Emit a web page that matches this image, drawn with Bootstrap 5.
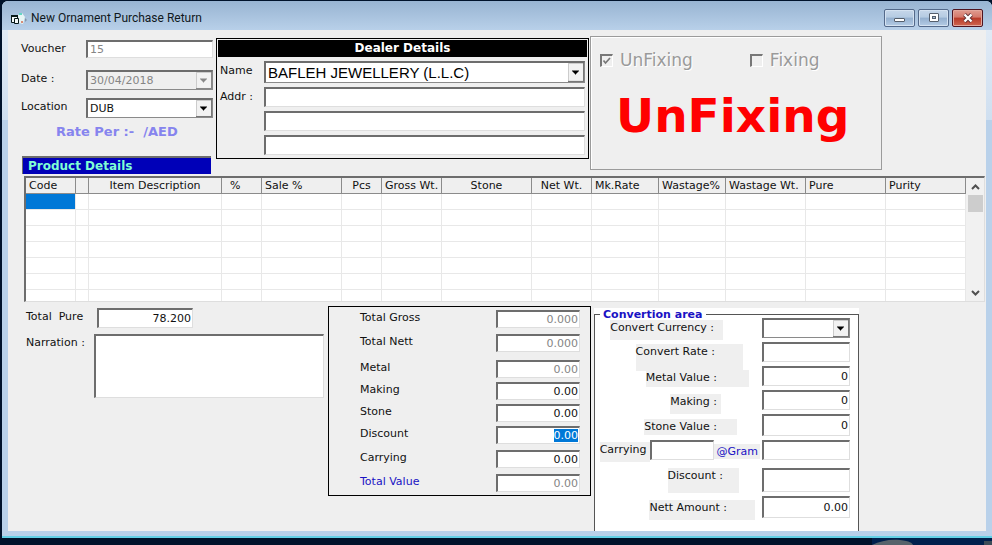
<!DOCTYPE html>
<html lang="en">
<head>
<meta charset="utf-8">
<meta name="viewport" content="width=device-width, initial-scale=1">
<title>New Ornament Purchase Return</title>
<link href="https://cdn.jsdelivr.net/npm/bootstrap@5.3.0/dist/css/bootstrap.min.css" rel="stylesheet">
<style>
:root{--face:#efefef;--frame:#b9d1ea;--dark:#6d6d6d;--light:#dedede;--ink:#111;}
body{background:#00122b;font:11px/14px "DejaVu Sans",Verdana,sans-serif;color:var(--ink);}
.desk{padding:1px 0 0 2px;}
.win{background:linear-gradient(#e6eef7 0,#cfdff0 119px,var(--frame) 119px);border-bottom:2px solid #63d0e6;border-radius:6px 6px 0 0;padding:0 6px 5px;}
.titlebar{height:29px;background:linear-gradient(#98b4d2,#b8d0e9);margin:0 -6px;padding:8px 9px 3px 8px;border-radius:6px 6px 0 0;}
.caption{font:12px/18px Roboto,"Open Sans",sans-serif;color:#101820;}
.wbtns{gap:3px;}
.wbtn{width:31px;height:18px;border:1px solid #53698a;border-radius:2px;padding:0;display:flex;align-items:center;justify-content:center;background:linear-gradient(#c6d7ea 0,#b5cbe2 45%,#94b0cf 50%,#b4cce5 100%);box-shadow:inset 0 0 0 1px #d4e2f1;}
.wbtn.shut{border-color:#4f1420;background:linear-gradient(#e09c90 0,#d4796b 45%,#b83a28 50%,#cf6650 100%);box-shadow:inset 0 0 0 1px #e3a79c;}
.client{background:var(--face);}
.top-grid{display:grid;grid-template-columns:208px minmax(0,373fr) minmax(0,293fr) minmax(0,104fr);}
.fld{display:block;width:100%;min-width:0;height:18px;border:1px solid;border-width:2px 1px 1px 2px;border-color:var(--dark) var(--light) var(--light) var(--dark);background:#fff;color:var(--ink);padding:0 2px;border-radius:0;outline:0;font:inherit;}
.fld:disabled{color:#858585;opacity:1;}
.fld.tall{height:20px;}
.num{text-align:right;padding-right:1px;}
textarea.fld{resize:none;height:64px;}
select.fld{appearance:none;height:20px;border-color:var(--dark) #8a8a8a #8a8a8a var(--dark);padding-right:18px;background:#fff url("data:image/svg+xml,%3Csvg xmlns='http://www.w3.org/2000/svg' width='16' height='100%25'%3E%3Crect width='16' height='100%25' fill='%23777'/%3E%3Crect width='15' height='94%25' fill='%23ccc'/%3E%3Crect x='1' y='1' width='14' height='88%25' fill='%23f2f2f2'/%3E%3Csvg y='50%25' overflow='visible'%3E%3Cpath d='M4-2h7v1h-1v1H9v1H8v1H7v-1H6v-1H5v-1H4z' fill='%23000'/%3E%3C/svg%3E%3C/svg%3E") right 0 top 0/16px 100% no-repeat;}
select.fld:disabled{background-color:var(--face);background-image:url("data:image/svg+xml,%3Csvg xmlns='http://www.w3.org/2000/svg' width='16' height='100%25'%3E%3Crect width='16' height='100%25' fill='%23888'/%3E%3Crect width='15' height='94%25' fill='%23ccc'/%3E%3Crect x='1' y='1' width='14' height='88%25' fill='%23f2f2f2'/%3E%3Csvg y='50%25' overflow='visible'%3E%3Cpath d='M4-2h7v1h-1v1H9v1H8v1H7v-1H6v-1H5v-1H4z' fill='%23888'/%3E%3C/svg%3E%3C/svg%3E");}
.fld::selection{background:#0078d7;color:#fff;}
.head-form{display:grid;grid-template-columns:65px minmax(0,1fr);grid-template-rows:30px 28px 26px;padding:10px 3px 0 13px;align-items:start;}
.head-form label{padding-top:2px;}
.rate{font-weight:700;font-size:13px;line-height:16px;color:#8684ee;padding-left:48px;}
.strip{background:#0000b8;color:#7fffd4;font-weight:700;font-size:12px;line-height:16px;border:1px solid var(--dark);border-width:2px 0 0 1px;margin:16px 5px 0 14px;padding-left:5px;}
.dealer{border:1px solid #000;margin-top:8px;padding:1px;height:121px;}
.dealer-title{background:#000;color:#fff;font-weight:700;font-size:12px;line-height:17px;text-align:center;}
.dealer-form{display:grid;grid-template-columns:45px minmax(0,1fr);row-gap:4px;padding:4px 2px 0 1px;align-items:start;}
.dealer-form label{padding:3px 0 0 1px;}
.dealer-form select.fld{height:22px;font:15px/18px "Liberation Sans",Arial,sans-serif;color:#000;}
.fixing{border:1px solid #9b9b9b;box-shadow:inset 1px 1px 0 #fff;margin:6px 0 0 1px;height:134px;}
.tick{appearance:none;width:13px;height:13px;margin:0;border:2px solid;border-width:2px 1px 1px 2px;border-color:#777 #fff #fff #777;background:var(--face);flex:none;}
.tick:checked{background:url("data:image/svg+xml,%3Csvg xmlns='http://www.w3.org/2000/svg' viewBox='0 0 10 10'%3E%3Cpath d='M1.500 4.500L3.500 7L8 2' fill='none' stroke='%23777' stroke-width='1.700'/%3E%3C/svg%3E");}
.ticks{font-size:17px;line-height:20px;color:#9a9a9a;text-shadow:1px 1px 0 #fff;padding:13px 0 0 9px;gap:57px;}
.ticks .d-flex{gap:7px;}
.state{color:#f00;font-weight:700;font-size:47px;line-height:56px;padding:18px 0 0 25px;}
.gridbox{display:flex;border:1px solid;border-width:2px 1px 1px 2px;border-color:var(--dark) var(--light) var(--light) var(--dark);background:#fff;margin:2px 1px 0 16px;height:126px;overflow:hidden;}
.items{table-layout:fixed;width:100%;border-collapse:separate;border-spacing:0;}
.items th{font-weight:400;height:16px;line-height:15px;padding:0 3px;background:var(--face);border-right:1px solid #8b8b8b;border-bottom:1px solid #8b8b8b;white-space:nowrap;overflow:hidden;}
.items td{height:16px;padding:0;border-right:1px solid #e8e8e8;border-bottom:1px solid #e8e8e8;}
.items td.cur{background:#0078d7;}
.vbar{width:18px;flex:none;background:#f1f1f1;display:flex;flex-direction:column;align-items:center;padding:0 1px;}
.vbar button{border:0;background:none;padding:0;height:17px;width:15px;display:flex;align-items:center;justify-content:center;}
.thumb{width:15px;height:17px;background:#cdcdcd;}
.low-grid{display:grid;grid-template-columns:minmax(0,320fr) minmax(0,263fr) minmax(0,3fr) minmax(0,265fr) minmax(0,127fr);min-height:227px;}
.pure{display:grid;grid-template-columns:71px 96px;padding:6px 0 0 18px;}
.narr{display:grid;grid-template-columns:68px minmax(0,1fr);padding:6px 4px 0 18px;}
.pure label,.narr label{padding-top:2px;white-space:pre;}
.totals{border:1px solid #000;margin-top:4px;padding:3px 10px 3px 31px;display:grid;grid-template-columns:minmax(0,1fr) 84px;grid-template-rows:24px 26px 22px 22px 22px 24px 24px 18px;align-items:start;align-self:start;}
.totals label{line-height:16px;}
.blue{color:#1a12c4;}
.conv-wrap{background:#fff;margin-top:6px;display:flex;}
.conv{border:1px solid #555;border-bottom:0;flex:1 1 auto;min-width:0;}
.conv legend{float:none;width:auto;margin:0 0 0 5px;padding:0 3px;font:700 11px/13px "DejaVu Sans",Verdana,sans-serif;color:#1a12c4;background:#fff;}
.conv-rows{display:grid;grid-template-rows:24px 24px 24px 24px 26px 28px 28px 22px;padding-right:8px;margin-top:-3px;}
.crow{display:flex;align-items:flex-start;justify-content:flex-end;}
.crow .fld{width:88px;flex:none;height:20px;}
.crow .fld.part{width:64px;}
.tag{background:var(--face);line-height:16px;height:20px;margin-top:2px;white-space:nowrap;}
.tag-a{padding-right:9px;margin-right:39px;}
.tag-b{padding-right:28px;margin-right:19px;height:27px;}
.tag-c{padding-right:32px;margin-right:13px;height:17px;margin-top:4px;}
.tag-d{padding-right:4px;margin-right:41px;margin-top:4px;}
.tag-e{padding-right:20px;margin-right:25px;height:16px;margin-top:5px;}
.tag-f{padding-right:4px;}
.tag-g{padding:0 2px;margin-right:2px;margin-top:4px;height:15px;}
.tag-h{padding-right:16px;margin-right:23px;height:25px;margin-top:0;}
.tag-i{padding-right:28px;margin-right:7px;margin-top:4px;}
.crow .fld.deep{height:24px;}
.crow .fld.mid{height:22px;}
</style>
</head>
<body>
<div class="desk min-vh-100 d-flex flex-column">
<main class="win flex-grow-1 d-flex flex-column">
  <header class="titlebar d-flex align-items-start">
    <svg width="17" height="18" viewBox="0 0 17 18" class="me-1" aria-hidden="true">
      <path d="M8 6l4-2 3 4-2 7-4-1z" fill="#e6f4f4"/><path d="M9 4h3v2H9z" fill="#65d6c4"/><path d="M15 9l2 2-2 2z" fill="#8594a5"/><path d="M11 12h2v2h-2z" fill="#d98d78"/>
      <path d="M1.500 6.500h6v7h-6z" fill="#f4fafa" stroke="#071818"/><path d="M1 6h7v2H1z" fill="#071818"/>
      <path d="M4.500 9.500h4v5h-4z" fill="#f4fafa" stroke="#071818"/>
    </svg>
    <span class="caption flex-grow-1">New Ornament Purchase Return</span>
    <span class="d-flex wbtns">
      <button type="button" class="wbtn" aria-label="Minimize"><svg width="13" height="10" viewBox="0 0 13 10"><rect x="1.500" y="5.500" width="10" height="3" rx=".5" fill="#fff" stroke="#555f6c"/></svg></button>
      <button type="button" class="wbtn" aria-label="Maximize"><svg width="12" height="10" viewBox="0 0 12 10"><rect x="1.500" y=".5" width="9" height="8" rx=".5" fill="#fff" stroke="#555f6c"/><rect x="4.500" y="3.500" width="3" height="2" fill="#a9bfd6" stroke="#555f6c"/></svg></button>
      <button type="button" class="wbtn shut" aria-label="Close"><svg width="12" height="10" viewBox="0 0 12 10"><path d="M2.500 1.500l7 7M9.500 1.500l-7 7" stroke="#5d3034" stroke-width="4"/><path d="M2.500 1.500l7 7M9.500 1.500l-7 7" stroke="#fff" stroke-width="2.400"/></svg></button>
    </span>
  </header>

  <form class="client flex-grow-1 d-flex flex-column" onsubmit="return false">
    <div class="top-grid">
      <section>
        <div class="head-form">
          <label for="voucher">Voucher</label><input id="voucher" class="fld" value="15" disabled>
          <label for="date">Date :</label><select id="date" class="fld" disabled><option>30/04/2018</option></select>
          <label for="loc">Location</label><select id="loc" class="fld"><option>DUB</option></select>
        </div>
        <div class="rate">Rate Per :-&nbsp; /AED</div>
        <div class="strip">Product Details</div>
      </section>
      <section class="dealer">
        <div class="dealer-title">Dealer Details</div>
        <div class="dealer-form">
          <label for="dname">Name</label><select id="dname" class="fld"><option>BAFLEH JEWELLERY (L.L.C)</option></select>
          <label for="addr1">Addr :</label><input id="addr1" class="fld tall">
          <span></span><input class="fld tall" aria-label="Address line 2">
          <span></span><input class="fld tall" aria-label="Address line 3">
        </div>
      </section>
      <section class="fixing">
        <div class="ticks d-flex">
          <div class="d-flex align-items-center"><input type="checkbox" class="tick" id="unfix" checked disabled><label for="unfix">UnFixing</label></div>
          <div class="d-flex align-items-center"><input type="checkbox" class="tick" id="fix" disabled><label for="fix">Fixing</label></div>
        </div>
        <div class="state">UnFixing</div>
      </section>
    </div>

    <div class="gridbox">
      <div class="flex-grow-1">
      <table class="items">
        <colgroup><col style="width:50px"><col style="width:13px"><col style="width:133px"><col style="width:40px"><col style="width:80px"><col style="width:40px"><col style="width:60px"><col style="width:90px"><col style="width:60px"><col style="width:67px"><col style="width:67px"><col style="width:80px"><col style="width:80px"><col style="width:80px"></colgroup>
        <thead><tr><th>Code</th><th></th><th class="text-center">Item Description</th><th class="ps-2">%</th><th>Sale %</th><th class="text-center">Pcs</th><th>Gross Wt.</th><th class="text-center">Stone</th><th class="text-center">Net Wt.</th><th>Mk.Rate</th><th>Wastage%</th><th>Wastage Wt.</th><th>Pure</th><th>Purity</th></tr></thead>
        <tbody>
          <tr><td class="cur"></td><td></td><td></td><td></td><td></td><td></td><td></td><td></td><td></td><td></td><td></td><td></td><td></td><td></td></tr>
          <tr><td></td><td></td><td></td><td></td><td></td><td></td><td></td><td></td><td></td><td></td><td></td><td></td><td></td><td></td></tr>
          <tr><td></td><td></td><td></td><td></td><td></td><td></td><td></td><td></td><td></td><td></td><td></td><td></td><td></td><td></td></tr>
          <tr><td></td><td></td><td></td><td></td><td></td><td></td><td></td><td></td><td></td><td></td><td></td><td></td><td></td><td></td></tr>
          <tr><td></td><td></td><td></td><td></td><td></td><td></td><td></td><td></td><td></td><td></td><td></td><td></td><td></td><td></td></tr>
          <tr><td></td><td></td><td></td><td></td><td></td><td></td><td></td><td></td><td></td><td></td><td></td><td></td><td></td><td></td></tr>
          <tr><td></td><td></td><td></td><td></td><td></td><td></td><td></td><td></td><td></td><td></td><td></td><td></td><td></td><td></td></tr>
        </tbody>
      </table>
      </div>
      <div class="vbar">
        <button type="button" aria-label="Scroll up"><svg width="9" height="6" viewBox="0 0 9 6"><path d="M1 5l3.500-3.500L8 5" fill="none" stroke="#505050" stroke-width="2"/></svg></button>
        <div class="thumb"></div>
        <button type="button" class="mt-auto" aria-label="Scroll down"><svg width="9" height="6" viewBox="0 0 9 6"><path d="M1 1l3.500 3.500L8 1" fill="none" stroke="#505050" stroke-width="2"/></svg></button>
      </div>
    </div>

    <div class="low-grid flex-grow-1">
      <section>
        <div class="pure"><label for="tp">Total  Pure</label><input id="tp" class="fld tall num" value="78.200"></div>
        <div class="narr"><label for="narr">Narration :</label><textarea id="narr" class="fld"></textarea></div>
      </section>
      <section class="totals">
        <label for="t1">Total Gross</label><input id="t1" class="fld num" value="0.000" disabled>
        <label for="t2">Total Nett</label><input id="t2" class="fld num" value="0.000" disabled>
        <label for="t3">Metal</label><input id="t3" class="fld num" value="0.00" disabled>
        <label for="t4">Making</label><input id="t4" class="fld num" value="0.00">
        <label for="t5">Stone</label><input id="t5" class="fld num" value="0.00">
        <label for="t6">Discount</label><input id="t6" class="fld num" value="0.00">
        <label for="t7">Carrying</label><input id="t7" class="fld num" value="0.00">
        <label for="t8" class="blue">Total Value</label><input id="t8" class="fld num" value="0.00" disabled>
      </section>
      <span></span>
      <div class="conv-wrap">
      <fieldset class="conv">
        <legend>Convertion area</legend>
        <div class="conv-rows">
          <div class="crow"><label class="tag tag-a" for="c1">Convert Currency :</label><select id="c1" class="fld"><option></option></select></div>
          <div class="crow"><label class="tag tag-b" for="c2">Convert Rate :</label><input id="c2" class="fld num"></div>
          <div class="crow"><label class="tag tag-c" for="c3">Metal Value :</label><input id="c3" class="fld num" value="0"></div>
          <div class="crow"><label class="tag tag-d" for="c4">Making :</label><input id="c4" class="fld num" value="0"></div>
          <div class="crow"><label class="tag tag-e" for="c5">Stone Value :</label><input id="c5" class="fld mid num" value="0"></div>
          <div class="crow"><label class="tag tag-f" for="c6">Carrying</label><input id="c6" class="fld part num"><label class="tag tag-g blue" for="c7">@Gram</label><input id="c7" class="fld num"></div>
          <div class="crow"><label class="tag tag-h" for="c8">Discount :</label><input id="c8" class="fld deep num"></div>
          <div class="crow"><label class="tag tag-i" for="c9">Nett Amount :</label><input id="c9" class="fld mid num" value="0.00"></div>
        </div>
      </fieldset>
      </div>
    </div>
  </form>
</main>
<footer class="d-flex justify-content-end">
  <svg width="120" height="7" viewBox="0 0 120 7" class="d-block" aria-hidden="true"><path d="M0 0h120v7H0z" fill="#00204d"/><path d="M0 7C8 3 18 1 28 2s12 3 13 5z" fill="#56636b"/><path d="M112 3h8v4h-8z" fill="#3d4d58"/></svg>
</footer>
</div>
<script src="https://cdn.jsdelivr.net/npm/bootstrap@5.3.0/dist/js/bootstrap.bundle.min.js"></script>
<script>
const discount = document.getElementById('t6');
discount.focus();
discount.select();
</script>
</body>
</html>
